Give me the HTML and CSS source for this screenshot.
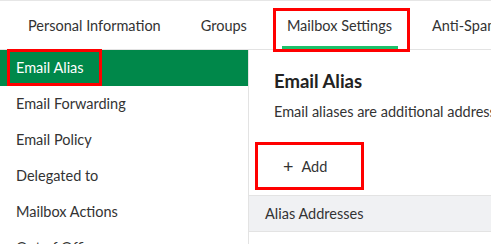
FILE: index.html
```html
<!DOCTYPE html>
<html lang="en">
<head>
    <meta charset="UTF-8">
    <meta name="viewport" content="width=device-width, initial-scale=1.0">
    <title>Mailbox Settings</title>
    <link rel="stylesheet" href="styles.css">
</head>
<body>
    <div class="tabs">
        <div class="tab">Personal Information</div>
        <div class="tab">Groups</div>
        <div class="tab active marked">Mailbox Settings</div>
        <div class="tab">Anti-Spam</div>
    </div>

    <div class="main">
        <ul class="sidebar">
            <li class="item selected"><span class="marked-item">Email Alias</span></li>
            <li class="item">Email Forwarding</li>
            <li class="item">Email Policy</li>
            <li class="item">Delegated to</li>
            <li class="item">Mailbox Actions</li>
            <li class="item">Out of Office</li>
        </ul>

        <div class="content">
            <h2>Email Alias</h2>
            <p class="desc">Email aliases are additional addresses for this mailbox.</p>
            <div class="add-row">
                <button type="button" class="add-btn"><span class="plus">+</span>Add</button>
            </div>
            <div class="table-head">Alias Addresses</div>
        </div>
    </div>
</body>
</html>
```

FILE: styles.css
```css
body {
    font-family: Lato, "Open Sans", sans-serif;
    margin: 0;
    padding: 0;
    background-color: #fff;
    color: #333;
    width: 491px;
    height: 244px;
    overflow: hidden;
}

.tabs {
    display: flex;
    height: 48px;
    padding-left: 8px;
    border-top: 1px solid #e6e6e6;
    border-bottom: 1px solid #e3e3e3;
    white-space: nowrap;
}

.tab {
    position: relative;
    padding: 0 20px;
    font-size: 14.5px;
    line-height: 50px;
    color: #333;
}

.tab.active::before {
    content: "";
    position: absolute;
    left: 15px;
    right: 14px;
    bottom: 0;
    height: 3px;
    background-color: #1cc16a;
}

.marked::after {
    content: "";
    position: absolute;
    left: 6px;
    right: 2px;
    top: 7px;
    bottom: -3px;
    border: 3px solid #f00;
}

.main {
    display: flex;
    height: 195px;
}

.sidebar {
    list-style: none;
    margin: 0;
    padding: 0;
    width: 248px;
    border-right: 1px solid #e3e3e3;
    flex-shrink: 0;
}

.item {
    height: 36px;
    line-height: 36px;
    padding-left: 16px;
    font-size: 14.5px;
    color: #333;
    white-space: nowrap;
}

.item.selected {
    background-color: #00884a;
    color: #fff;
}

.marked-item {
    position: relative;
}

.marked-item::after {
    content: "";
    position: absolute;
    left: -9px;
    right: -18px;
    top: -10px;
    bottom: -10px;
    border: 3px solid #f00;
}

.content {
    flex: 1;
    min-width: 0;
    white-space: nowrap;
    overflow: hidden;
}

h2 {
    margin: 18px 0 0 25px;
    font-size: 18.5px;
    font-weight: bold;
    color: #222;
    line-height: 26px;
}

.desc {
    margin: 8px 0 0 25px;
    font-size: 14.5px;
    line-height: 20px;
    color: #333;
}

.add-row {
    margin: 20px 0 5px 6px;
}

.add-btn {
    display: flex;
    align-items: center;
    width: 109px;
    height: 48px;
    padding: 0 0 0 25px;
    border: 3px solid #f00;
    background: #fff;
    font-family: Lato, "Open Sans", sans-serif;
    font-size: 14.5px;
    color: #333;
}

.plus {
    font-size: 18px;
    margin-right: 8px;
    line-height: 1;
}

.table-head {
    height: 35px;
    line-height: 35px;
    padding-left: 16px;
    background-color: #f0f1f3;
    border-top: 1px solid #e3e3e3;
    border-bottom: 1px solid #e3e3e3;
    font-size: 14.5px;
    color: #333;
}
```
